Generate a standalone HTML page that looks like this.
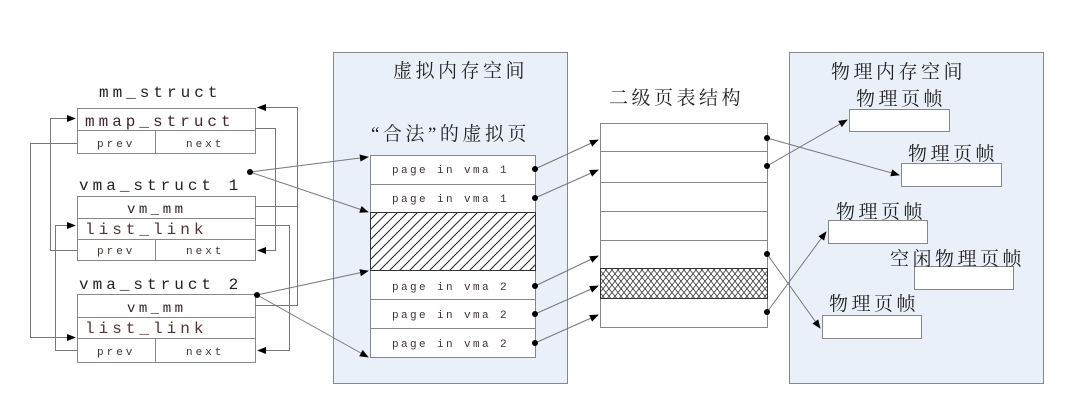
<!DOCTYPE html>
<html><head><meta charset="utf-8"><style>
html,body{margin:0;padding:0;background:#fff;width:1091px;height:417px;overflow:hidden}
text{font-family:"Liberation Mono",monospace}
.cn{font-family:"Liberation Serif","Noto Serif CJK SC","Noto Sans CJK SC",serif;font-size:19px;fill:#222;letter-spacing:3.5px}
</style></head><body>
<svg width="1091" height="417" viewBox="0 0 1091 417" xmlns="http://www.w3.org/2000/svg">
<defs>
<marker id="a" viewBox="0 0 10 10" refX="9" refY="5" markerWidth="9" markerHeight="9" orient="auto" markerUnits="userSpaceOnUse"><path d="M0,1 L10,5 L0,9 z" fill="#000"/></marker>
<pattern id="h" width="10" height="10" patternUnits="userSpaceOnUse"><path d="M0,10 L10,0 M-2,2 L2,-2 M8,12 L12,8" stroke="#222" stroke-width="1"/></pattern>
<pattern id="x" width="12" height="15" patternUnits="userSpaceOnUse"><path d="M0,0 L12,15 M12,0 L0,15 M6,0 L0,7.5 L6,15 L12,7.5 z" stroke="#333" stroke-width="0.8" fill="none"/></pattern>
</defs>
<g stroke="#888" stroke-width="1" fill="#fff">
<rect x="333.5" y="52.5" width="234" height="331" fill="#eaf0fa"/>
<rect x="789.5" y="52.5" width="254" height="331" fill="#eaf0fa"/>
<rect x="77.5" y="108.5" width="178" height="45"/>
<line x1="77" y1="130.5" x2="255" y2="130.5"/><line x1="155.5" y1="130" x2="155.5" y2="153"/>
<rect x="77.5" y="196.5" width="178" height="64"/>
<line x1="77" y1="218.5" x2="255" y2="218.5"/><line x1="77" y1="239.5" x2="255" y2="239.5"/><line x1="155.5" y1="239" x2="155.5" y2="260"/>
<rect x="77.5" y="294.5" width="178" height="68"/>
<line x1="77" y1="317.5" x2="255" y2="317.5"/><line x1="77" y1="338.5" x2="255" y2="338.5"/><line x1="155.5" y1="338" x2="155.5" y2="362"/>
<rect x="370.5" y="155.5" width="165" height="202"/>
<rect x="370.5" y="212.5" width="165" height="58" fill="url(#h)" stroke="#333"/>
<line x1="370" y1="184.5" x2="535" y2="184.5"/><line x1="370" y1="299.5" x2="535" y2="299.5"/><line x1="370" y1="328.5" x2="535" y2="328.5"/>
<rect x="600.5" y="123.5" width="167" height="204"/>
<line x1="600" y1="151.5" x2="767" y2="151.5"/><line x1="600" y1="182.5" x2="767" y2="182.5"/><line x1="600" y1="211.5" x2="767" y2="211.5"/><line x1="600" y1="240.5" x2="767" y2="240.5"/>
<rect x="600.5" y="268.5" width="167" height="30" fill="url(#x)" stroke="#333"/>
<rect x="849.5" y="109.5" width="100" height="22"/>
<rect x="901.5" y="163.5" width="100" height="23"/>
<rect x="828.5" y="220.5" width="99" height="23"/>
<rect x="914.5" y="266.5" width="99" height="23"/>
<rect x="822.5" y="315.5" width="99" height="23"/>
</g>
<g stroke="#777" stroke-width="1" fill="none">
<path d="M255,206.5 H297.5 V107.5 H258" marker-end="url(#a)"/>
<path d="M255,305.5 H297.5 V206"/>
<path d="M255,128.5 H275.5 V250.5 H258" marker-end="url(#a)"/>
<path d="M255,225.5 H289.5 V350.5 H258" marker-end="url(#a)"/>
<path d="M77,250.5 H50.5 V118.5 H75" marker-end="url(#a)"/>
<path d="M77,143.5 H30.5 V337.5 H75" marker-end="url(#a)"/>
<path d="M77,350.5 H55.5 V225.5 H75" marker-end="url(#a)"/>
<path d="M250,172 L368,157" marker-end="url(#a)"/>
<path d="M250,172 L368,212" marker-end="url(#a)"/>
<path d="M257,295 L368,271" marker-end="url(#a)"/>
<path d="M257,295 L368,357" marker-end="url(#a)"/>
<path d="M535,169 L598,140" marker-end="url(#a)"/>
<path d="M535,198 L598,170" marker-end="url(#a)"/>
<path d="M535,286 L598,256" marker-end="url(#a)"/>
<path d="M535,314 L598,286" marker-end="url(#a)"/>
<path d="M535,343 L598,315" marker-end="url(#a)"/>
<path d="M767,138 L899,175" marker-end="url(#a)"/>
<path d="M767,166 L847,120" marker-end="url(#a)"/>
<path d="M767,254 L820,328" marker-end="url(#a)"/>
<path d="M767,312 L826,232" marker-end="url(#a)"/>
</g>
<g fill="#000">
<circle cx="250" cy="172" r="3"/><circle cx="257" cy="295" r="3"/>
<circle cx="535" cy="169" r="3"/><circle cx="535" cy="198" r="3"/><circle cx="535" cy="286" r="3"/><circle cx="535" cy="314" r="3"/><circle cx="535" cy="343" r="3"/>
<circle cx="767" cy="138" r="3"/><circle cx="767" cy="166" r="3"/><circle cx="767" cy="254" r="3"/><circle cx="767" cy="312" r="3"/>
</g>
<g fill="#222" font-size="16" letter-spacing="4">
<text x="99" y="97">mm_struct</text>
<text x="79" y="190">vma_struct 1</text>
<text x="79" y="289">vma_struct 2</text>
<text x="85" y="126" fill="#423">mmap_struct</text>
<text x="85" y="234" fill="#533">list_link</text>
<text x="85" y="333" fill="#533">list_link</text>
<text x="127" y="213" font-size="14" letter-spacing="3.5" fill="#322">vm_mm</text>
<text x="127" y="312" font-size="14" letter-spacing="3.5" fill="#322">vm_mm</text>
</g>
<g fill="#433" font-size="11" letter-spacing="3">
<text x="97" y="147">prev</text><text x="186" y="147">next</text>
<text x="97" y="254">prev</text><text x="186" y="254">next</text>
<text x="97" y="355">prev</text><text x="186" y="355">next</text>
</g>
<g fill="#433" font-size="11" letter-spacing="2.4">
<text x="392" y="173">page in vma 1</text>
<text x="392" y="202">page in vma 1</text>
<text x="392" y="290">page in vma 2</text>
<text x="392" y="318">page in vma 2</text>
<text x="392" y="347">page in vma 2</text>
</g>
<text class="cn" x="393" y="77">虚拟内存空间</text>
<text class="cn" x="371" y="140" letter-spacing="3">“合法”的虚拟页</text>
<text class="cn" x="609" y="104">二级页表结构</text>
<text class="cn" x="831" y="78">物理内存空间</text>
<text class="cn" x="856" y="105">物理页帧</text>
<text class="cn" x="908" y="160">物理页帧</text>
<text class="cn" x="836" y="218">物理页帧</text>
<text class="cn" x="890" y="265">空闲物理页帧</text>
<text class="cn" x="829" y="310">物理页帧</text>
</svg>
</body></html>
